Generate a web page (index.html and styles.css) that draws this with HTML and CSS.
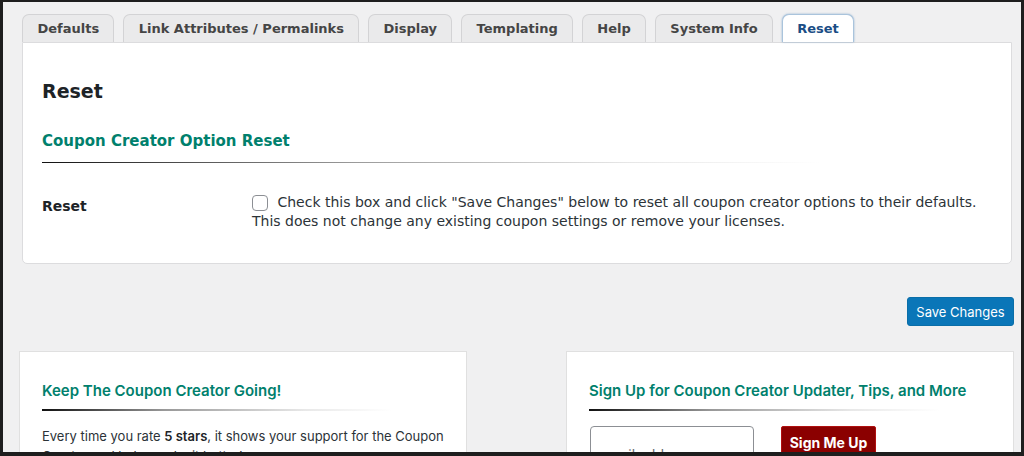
FILE: index.html
```html
<!DOCTYPE html>
<html>
<head>
<meta charset="utf-8">
<link rel="stylesheet" href="styles.css">
</head>
<body>
<div class="frame">
  <nav class="tabs">
    <span class="tab">Defaults</span>
    <span class="tab">Link Attributes / Permalinks</span>
    <span class="tab">Display</span>
    <span class="tab">Templating</span>
    <span class="tab">Help</span>
    <span class="tab">System Info</span>
    <span class="tab active">Reset</span>
  </nav>
  <section class="panel">
    <h2 class="title">Reset</h2>
    <h3 class="section-title">Coupon Creator Option Reset</h3>
    <div class="fade-line wide"></div>
    <div class="row">
      <div class="label">Reset</div>
      <div class="field">
        <span class="checkbox"></span> Check this box and click "Save Changes" below to reset all coupon creator options to their defaults.<br>This does not change any existing coupon settings or remove your licenses.
      </div>
    </div>
  </section>
  <div class="actions">
    <button class="save">Save Changes</button>
  </div>
  <div class="cards">
    <div class="card">
      <h3 class="card-title">Keep The Coupon Creator Going!</h3>
      <div class="fade-line short"></div>
      <p class="card-text">Every time you rate <strong>5 stars</strong>, it shows your support for the Coupon Creator and helps make it better!</p>
    </div>
    <div class="card">
      <h3 class="card-title">Sign Up for Coupon Creator Updater, Tips, and More</h3>
      <div class="fade-line short"></div>
      <div class="signup">
        <input class="email" type="text" placeholder="email address">
        <button class="signme">Sign Me Up</button>
      </div>
    </div>
  </div>
</div>
</body>
</html>
```

FILE: styles.css
```css
* { box-sizing: border-box; }
html, body { margin: 0; padding: 0; }
body { background: #1e1e1e; }

.frame {
  width: 1024px;
  height: 456px;
  overflow: hidden;
  background: #f0f0f1;
  border-style: solid;
  border-color: #1e1e1e;
  border-width: 2px 3px 4px 3px;
  padding: 12px 9px 0 19px;
  font-family: "DejaVu Sans", Verdana, sans-serif;
}

.tabs {
  display: flex;
  gap: 9px;
  height: 28px;
}
.tab {
  display: flex;
  align-items: center;
  height: 28px;
  padding: 0 14px 0 14.5px;
  background: #eaeaeb;
  border: 1px solid #d3d3d5;
  border-bottom: none;
  border-radius: 7px 7px 0 0;
  font-size: 13px;
  font-weight: bold;
  color: #454545;
}
.tab.active {
  background: #fff;
  color: #1a4d85;
  border-color: #aac4dc;
  box-shadow: 0 0 2px rgba(60,120,180,.6);
  position: relative;
  z-index: 1;
}

.panel {
  background: #fff;
  border: 1px solid #dcdcde;
  border-radius: 0 0 5px 5px;
  height: 222px;
  padding: 35px 20px 0 19px;
}
.title {
  margin: 0;
  font-size: 19px;
  font-weight: bold;
  color: #1d2327;
  line-height: 26px;
}
.section-title {
  margin: 27px 0 0;
  font-size: 15px;
  font-weight: bold;
  color: #00806d;
  line-height: 20px;
}
.fade-line {
  height: 1px;
  background: linear-gradient(to right, #111 0%, #9a9a9a 40%, #e6e6e6 75%, rgba(255,255,255,0) 100%);
}
.fade-line.wide { width: 82%; margin-top: 11px; }
.fade-line.short { width: 87%; margin-top: 8px; height: 2px; background: linear-gradient(to right, #111 0%, #999 35%, #e8e8e8 75%, rgba(255,255,255,0) 100%); }

.row {
  display: grid;
  grid-template-columns: 210px 1fr;
  margin-top: 30px;
}
.label {
  font-size: 14px;
  font-weight: bold;
  color: #1d2327;
  padding-top: 5px;
}
.field {
  font-size: 14px;
  line-height: 19px;
  color: #2c3338;
}
.checkbox {
  display: inline-block;
  width: 16px;
  height: 16px;
  border: 1px solid #8c8f94;
  border-radius: 4px;
  vertical-align: -4px;
  margin-right: 5px;
  background: #fff;
}

.actions {
  display: flex;
  justify-content: flex-end;
  margin: 33px -2px 0 0;
}
.save {
  width: 107px;
  height: 29px;
  border: 1px solid #0a6ea8;
  border-radius: 3px;
  background: #0a76b8;
  color: #fff;
  font-family: Inter, "Liberation Sans", sans-serif;
  font-size: 13px;
  padding: 0;
}

.cards {
  display: flex;
  justify-content: space-between;
  margin: 25px -2px 0 -3px;
}
.card {
  width: 448px;
  height: 140px;
  background: #fff;
  border: 1px solid #e0e0e0;
  padding: 29px 22px 0 22px;
  font-family: Inter, "Liberation Sans", sans-serif;
}
.card-title {
  margin: 0;
  font-size: 15px;
  font-weight: 600;
  color: #00806d;
  line-height: 20px;
}
.card-text {
  margin: 15px 0 0;
  font-size: 13px;
  line-height: 20px;
  color: #2c3338;
}
.card-text strong { font-weight: 600; color: #1d2327; }

.signup {
  display: flex;
  gap: 27px;
  margin-top: 15px;
  padding-left: 1px;
}
.email {
  width: 164px;
  height: 56px;
  border: 1px solid #8c8f94;
  border-radius: 4px;
  padding: 0 9px;
  font-family: Inter, "Liberation Sans", sans-serif;
  font-size: 14px;
}
.email::placeholder { color: #646970; }
.signme {
  width: 95px;
  height: 40px;
  background: #8b0000;
  border: 1px solid #b01010;
  border-radius: 2px;
  color: #fff;
  font-family: Inter, "Liberation Sans", sans-serif;
  font-weight: 700;
  font-size: 14px;
  padding: 0 0 8px;
}
```
